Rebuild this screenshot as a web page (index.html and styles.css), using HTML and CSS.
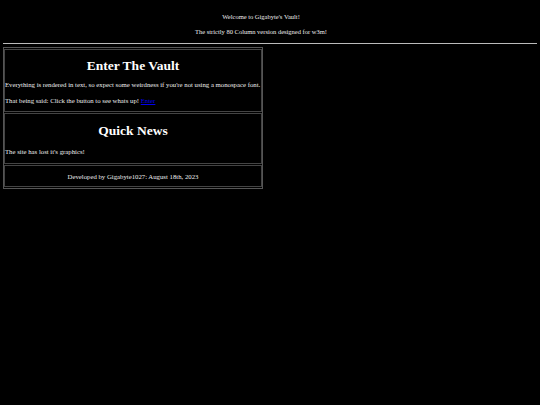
FILE: index.html
```html
<!DOCTYPE html>
<html>
<head>
<meta charset="utf-8">
<link rel="stylesheet" href="styles.css">
</head>
<body>
<div class="intro">
  <p class="line">Welcome to Gigabyte's Vault!</p>
  <p class="line">The strictly 80 Column version designed for w3m!</p>
</div>
<hr class="rule">
<div class="vault">
  <div class="cell">
    <h1 class="title">Enter The Vault</h1>
    <p class="text">Everything is rendered in text, so expect some weirdness if you're not using a monospace font.</p>
    <p class="text last">That being said: Click the button to see whats up! <a class="link" href="#">Enter</a></p>
  </div>
  <div class="cell">
    <h1 class="title news-title">Quick News</h1>
    <p class="text news">The site has lost it's graphics!</p>
  </div>
  <div class="cell footer">
    <p class="text center">Developed by Gigabyte1027: August 18th, 2023</p>
  </div>
</div>
</body>
</html>
```
FILE: styles.css
```css
html, body {
  background: #000;
}
body {
  margin: 0;
  padding: 13px 3px 0 3px;
  color: #eee;
  font-family: "Liberation Serif", "Times New Roman", serif;
  font-size: 6.5px;
  line-height: 8px;
}
.intro {
  text-align: center;
  padding-right: 18px;
}
.line {
  margin: 0 0 7px 0;
}
.rule {
  margin: 3px 0 3px 0;
  border: 0;
  border-top: 1px solid #bbb;
  height: 0;
}
.vault {
  width: 260px;
  border: 1px solid #555;
  display: flex;
  flex-direction: column;
  padding: 1px 0;
  gap: 1px;
  box-sizing: border-box;
  font-size: 6.75px;
}
.cell {
  border: 1px solid #444;
  padding: 0;
}
.title {
  font-size: 13.5px;
  line-height: 15px;
  text-align: center;
  margin: 8px 0 8px 0;
  font-weight: bold;
  color: #fff;
}
.title.news-title {
  margin-top: 9px;
}
.text {
  margin: 0 0 8px 0;
  white-space: nowrap;
}
.text.last {
  margin-bottom: 6px;
}
.text.news {
  margin: 10px 0 7px 0;
}
.center {
  text-align: center;
}
.footer .text {
  margin: 7px 0 5px 0;
}
.link {
  color: #0000ee;
}
```
